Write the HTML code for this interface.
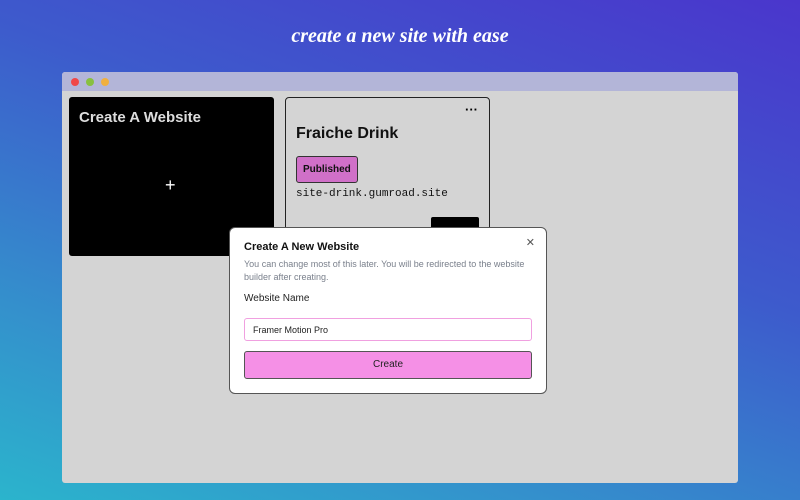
<!DOCTYPE html>
<html><head><style>
*{margin:0;padding:0;box-sizing:border-box}
body{width:800px;height:500px;overflow:hidden;position:relative;font-family:"Liberation Sans",sans-serif;
background:linear-gradient(200deg,#4a36cc 0%,#3d5bcc 40%,#3490cc 75%,#2bb4cc 100%);}
.title{position:absolute;top:25px;width:100%;text-align:center;color:#fff;font-family:"Liberation Serif",serif;font-style:italic;font-weight:bold;font-size:20px;}
.win{position:absolute;left:62px;top:72px;width:676px;height:411px;background:#d4d4d4;border-radius:3px;overflow:hidden}
.bar{height:19px;background:#b3b5d8;position:relative}
.dot{position:absolute;top:6px;width:8px;height:8px;border-radius:50%}
.c1{position:absolute;left:7px;top:25px;width:205px;height:159px;background:#000;border-radius:3px;color:#ddd}
.c1 h2{font-size:15px;position:absolute;left:10px;top:12px}
.c1 .p{position:absolute;left:96px;top:78px;font-size:18px;color:#fff}
.c2{position:absolute;left:223px;top:25px;width:205px;height:180px;border:1px solid #222;border-radius:4px}
.c2 h2{font-size:16px;position:absolute;left:10px;top:27px;color:#111}
.pub{position:absolute;left:10px;top:58px;background:#d070c8;border:1px solid #333;border-radius:3px;font-size:10px;font-weight:bold;padding:7px 6px;color:#111}
.url{position:absolute;left:10px;top:90px;font-family:"Liberation Mono",monospace;font-size:11px;color:#111}
.blk{position:absolute;left:145px;top:119px;width:48px;height:20px;background:#000;border-radius:2px}
.modal{position:absolute;left:229px;top:227px;width:318px;height:167px;background:#fff;border:1px solid #555;border-radius:6px}
.modal h3{position:absolute;left:14px;top:13px;font-size:11px;color:#111}
.modal .d{position:absolute;left:14px;top:30px;width:295px;font-size:9px;line-height:13px;color:#7a808c}
.modal .l{position:absolute;left:14px;top:65px;font-size:10px;color:#222}
.inp{position:absolute;left:14px;top:90px;width:288px;height:23px;border:1px solid #f0a0e0;border-radius:3px;font-size:9px;padding:6px 8px;color:#222}
.btn{position:absolute;left:14px;top:123px;width:288px;height:28px;background:#f590e6;border:1px solid #555;border-radius:3px;font-size:10px;text-align:center;line-height:26px;color:#222}
.x{position:absolute;right:11px;top:8px;font-size:11px;color:#555}
</style></head><body>
<div class="title">create a new site with ease</div>
<div class="win">
<div class="bar"><div class="dot" style="left:9px;background:#f04848"></div><div class="dot" style="left:24px;background:#88c040"></div><div class="dot" style="left:39px;background:#f0b040"></div></div>
<div class="c1"><h2>Create A Website</h2><div class="p">+</div></div>
<div class="c2"><div style="position:absolute;right:11px;top:4px;font-weight:bold;font-size:13px">···</div><h2>Fraiche Drink</h2><div class="pub">Published</div><div class="url">site-drink.gumroad.site</div><div class="blk"></div></div>
</div>
<div class="modal"><div class="x">✕</div><h3>Create A New Website</h3><div class="d">You can change most of this later. You will be redirected to the website builder after creating.</div><div class="l">Website Name</div><div class="inp">Framer Motion Pro</div><div class="btn">Create</div></div>
</body></html>
